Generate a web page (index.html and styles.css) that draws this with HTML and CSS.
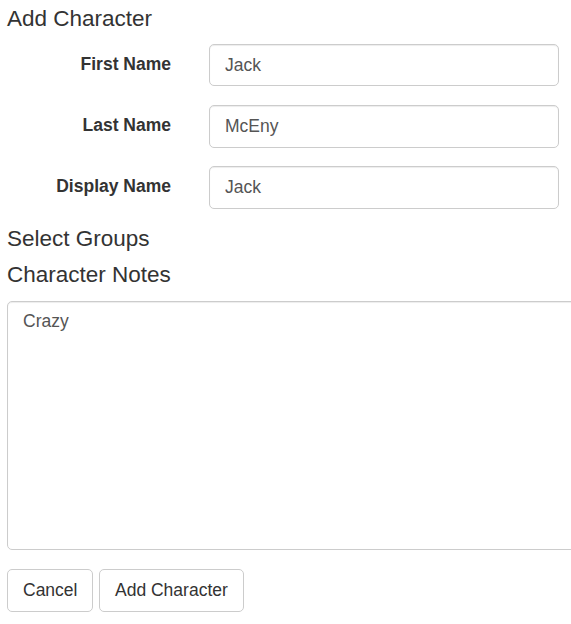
FILE: index.html
```html
<!DOCTYPE html>
<html lang="en">
<head>
<meta charset="utf-8">
<title>Add Character</title>
<link rel="stylesheet" href="styles.css">
</head>
<body>
<h4 class="title">Add Character</h4>
<form class="char-form">
  <div class="form-row">
    <label class="row-label" for="first">First Name</label>
    <input class="text-input" id="first" type="text" value="Jack">
  </div>
  <div class="form-row">
    <label class="row-label" for="last">Last Name</label>
    <input class="text-input" id="last" type="text" value="McEny">
  </div>
  <div class="form-row">
    <label class="row-label" for="display">Display Name</label>
    <input class="text-input" id="display" type="text" value="Jack">
  </div>
  <h4 class="section-title groups">Select Groups</h4>
  <h4 class="section-title notes">Character Notes</h4>
  <div class="notes-wrap">
    <textarea class="notes-area">Crazy</textarea>
  </div>
  <div class="actions">
    <button type="button" class="btn">Cancel</button>
    <button type="button" class="btn">Add Character</button>
  </div>
</form>
</body>
</html>
```
FILE: styles.css
```css
html, body {
  overflow-x: hidden;
}
body {
  margin: 0;
  padding: 6.5px 7px 0;
  font-family: "Liberation Sans", Arial, sans-serif;
  font-size: 17.5px;
  line-height: 25px;
  color: #333;
  background: #fff;
}
.title,
.section-title {
  font-size: 22.5px;
  font-weight: 400;
  line-height: 1.1;
  margin: 0 0 12.5px;
  color: #333;
}
.section-title.groups {
  margin-top: -0.5px;
  margin-bottom: 11.5px;
}
.section-title.notes {
  margin-bottom: 12.5px;
}
.char-form {
  margin: 0;
}
.form-row {
  display: grid;
  grid-template-columns: 164px 350px;
  column-gap: 38px;
  margin-bottom: 18.75px;
}
.row-label {
  text-align: right;
  font-weight: 700;
  padding-top: 8px;
  line-height: 25px;
}
.text-input,
.notes-area {
  box-sizing: border-box;
  font-family: inherit;
  font-size: 17.5px;
  line-height: 25px;
  color: #555;
  background: #fff;
  border: 1px solid #ccc;
  border-radius: 5px;
  box-shadow: inset 0 1px 1px rgba(0, 0, 0, 0.075);
  padding: 7.5px 15px;
  margin: 0;
}
.text-input {
  height: 42.5px;
  width: 350px;
}
.notes-wrap {
  overflow: hidden;
  margin-right: -7px;
}
.notes-area {
  display: block;
  width: 620px;
  height: 249px;
  resize: none;
}
.actions {
  margin-top: 19.5px;
  display: flex;
  gap: 5.5px;
}
.btn {
  box-sizing: border-box;
  height: 42.5px;
  padding: 7.5px 15px;
  font-family: inherit;
  font-size: 17.5px;
  line-height: 25px;
  color: #333;
  background: #fff;
  border: 1px solid #ccc;
  border-radius: 5px;
  margin: 0;
}
```
